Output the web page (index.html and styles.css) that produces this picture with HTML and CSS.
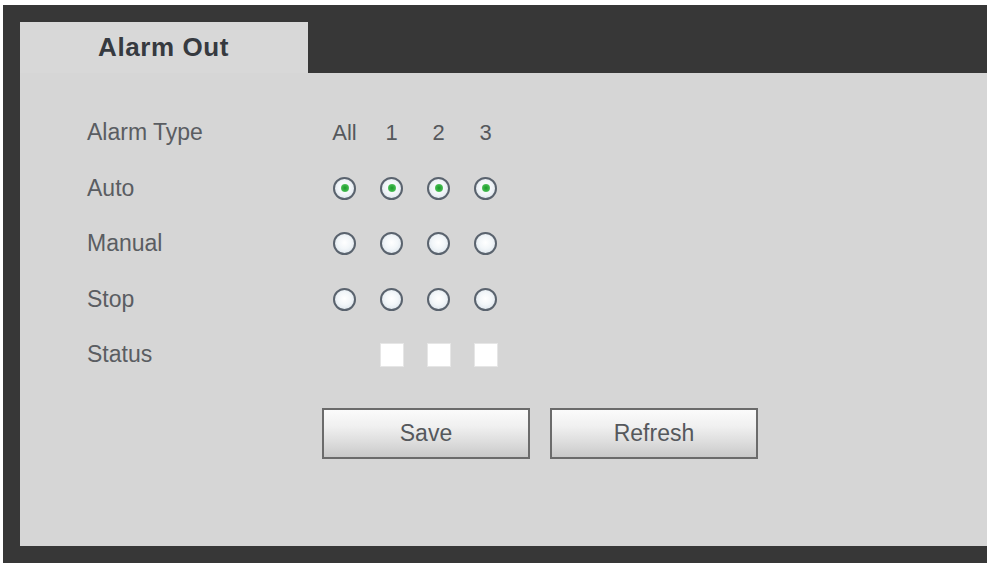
FILE: index.html
```html
<!DOCTYPE html>
<html lang="en">
<head>
<meta charset="utf-8">
<title>Alarm Out</title>
<link rel="stylesheet" href="styles.css">
</head>
<body>
<div class="frame">
  <div class="panel">
    <div class="tabbar">
      <div class="tab">Alarm Out</div>
      <div class="tabfill"></div>
    </div>
    <div class="content">
      <div class="grid">
        <div class="label">Alarm Type</div>
        <div class="head">All</div>
        <div class="head">1</div>
        <div class="head">2</div>
        <div class="head">3</div>

        <div class="label">Auto</div>
        <div class="cell"><span class="radio checked"></span></div>
        <div class="cell"><span class="radio checked"></span></div>
        <div class="cell"><span class="radio checked"></span></div>
        <div class="cell"><span class="radio checked"></span></div>

        <div class="label">Manual</div>
        <div class="cell"><span class="radio"></span></div>
        <div class="cell"><span class="radio"></span></div>
        <div class="cell"><span class="radio"></span></div>
        <div class="cell"><span class="radio"></span></div>

        <div class="label">Stop</div>
        <div class="cell"><span class="radio"></span></div>
        <div class="cell"><span class="radio"></span></div>
        <div class="cell"><span class="radio"></span></div>
        <div class="cell"><span class="radio"></span></div>

        <div class="label">Status</div>
        <div class="cell"></div>
        <div class="cell"><span class="box"></span></div>
        <div class="cell"><span class="box"></span></div>
        <div class="cell"><span class="box"></span></div>
      </div>
      <div class="actions">
        <button class="btn" type="button">Save</button>
        <button class="btn" type="button">Refresh</button>
      </div>
    </div>
  </div>
</div>
</body>
</html>
```

FILE: styles.css
```css
html, body {
  margin: 0;
  padding: 0;
  background: #ffffff;
}

body {
  padding: 5px 0 0 3px;
  font-family: "Liberation Sans", Arial, sans-serif;
}

.frame {
  background: #373737;
  padding: 17px 0 17px 17px;
  height: 524px;
}

.panel {
  background: #d6d6d6;
  height: 524px;
  display: flex;
  flex-direction: column;
}

.tabbar {
  display: flex;
  height: 51px;
}

.tab {
  width: 210px;
  padding-left: 78px;
  background: #d8d8d8;
  font-weight: bold;
  font-size: 26px;
  letter-spacing: 0.6px;
  color: #363a40;
  line-height: 51px;
}

.tabfill {
  flex: 1;
  background: #373737;
}

.content {
  flex: 1;
  padding: 32px 0 0 67px;
}

.grid {
  display: grid;
  grid-template-columns: 234px repeat(4, 47px);
  grid-auto-rows: 55.5px;
  align-items: center;
}

.label {
  font-size: 23px;
  color: #5a5d62;
}

.head {
  font-size: 22px;
  color: #55585c;
  text-align: center;
}

.cell {
  display: flex;
  justify-content: center;
  align-items: center;
}

.radio {
  width: 19px;
  height: 19px;
  border-radius: 50%;
  border: 2px solid #5a636e;
  background: radial-gradient(circle at 50% 45%, #ffffff 0%, #f2f6f9 45%, #d3dde6 100%);
  display: flex;
  justify-content: center;
  align-items: center;
}

.radio.checked::after {
  content: "";
  width: 8px;
  height: 8px;
  border-radius: 50%;
  background: radial-gradient(circle at 50% 50%, #1c9a2a 0%, #3cb64a 55%, #8fd595 100%);
}

.box {
  width: 22px;
  height: 22px;
  background: #ffffff;
  box-shadow: 0 0 0 1px #e6e6e6;
}

.actions {
  display: flex;
  gap: 20px;
  margin: 25px 0 0 235px;
}

.btn {
  width: 208px;
  height: 51px;
  border: 2px solid #6b6b6b;
  border-radius: 0;
  background: linear-gradient(#fbfbfb 0%, #f0f0f0 35%, #dcdcdc 70%, #c9c9c9 100%);
  font-family: "Liberation Sans", Arial, sans-serif;
  font-size: 23px;
  color: #55585c;
  padding: 0;
  margin: 0;
}
```
